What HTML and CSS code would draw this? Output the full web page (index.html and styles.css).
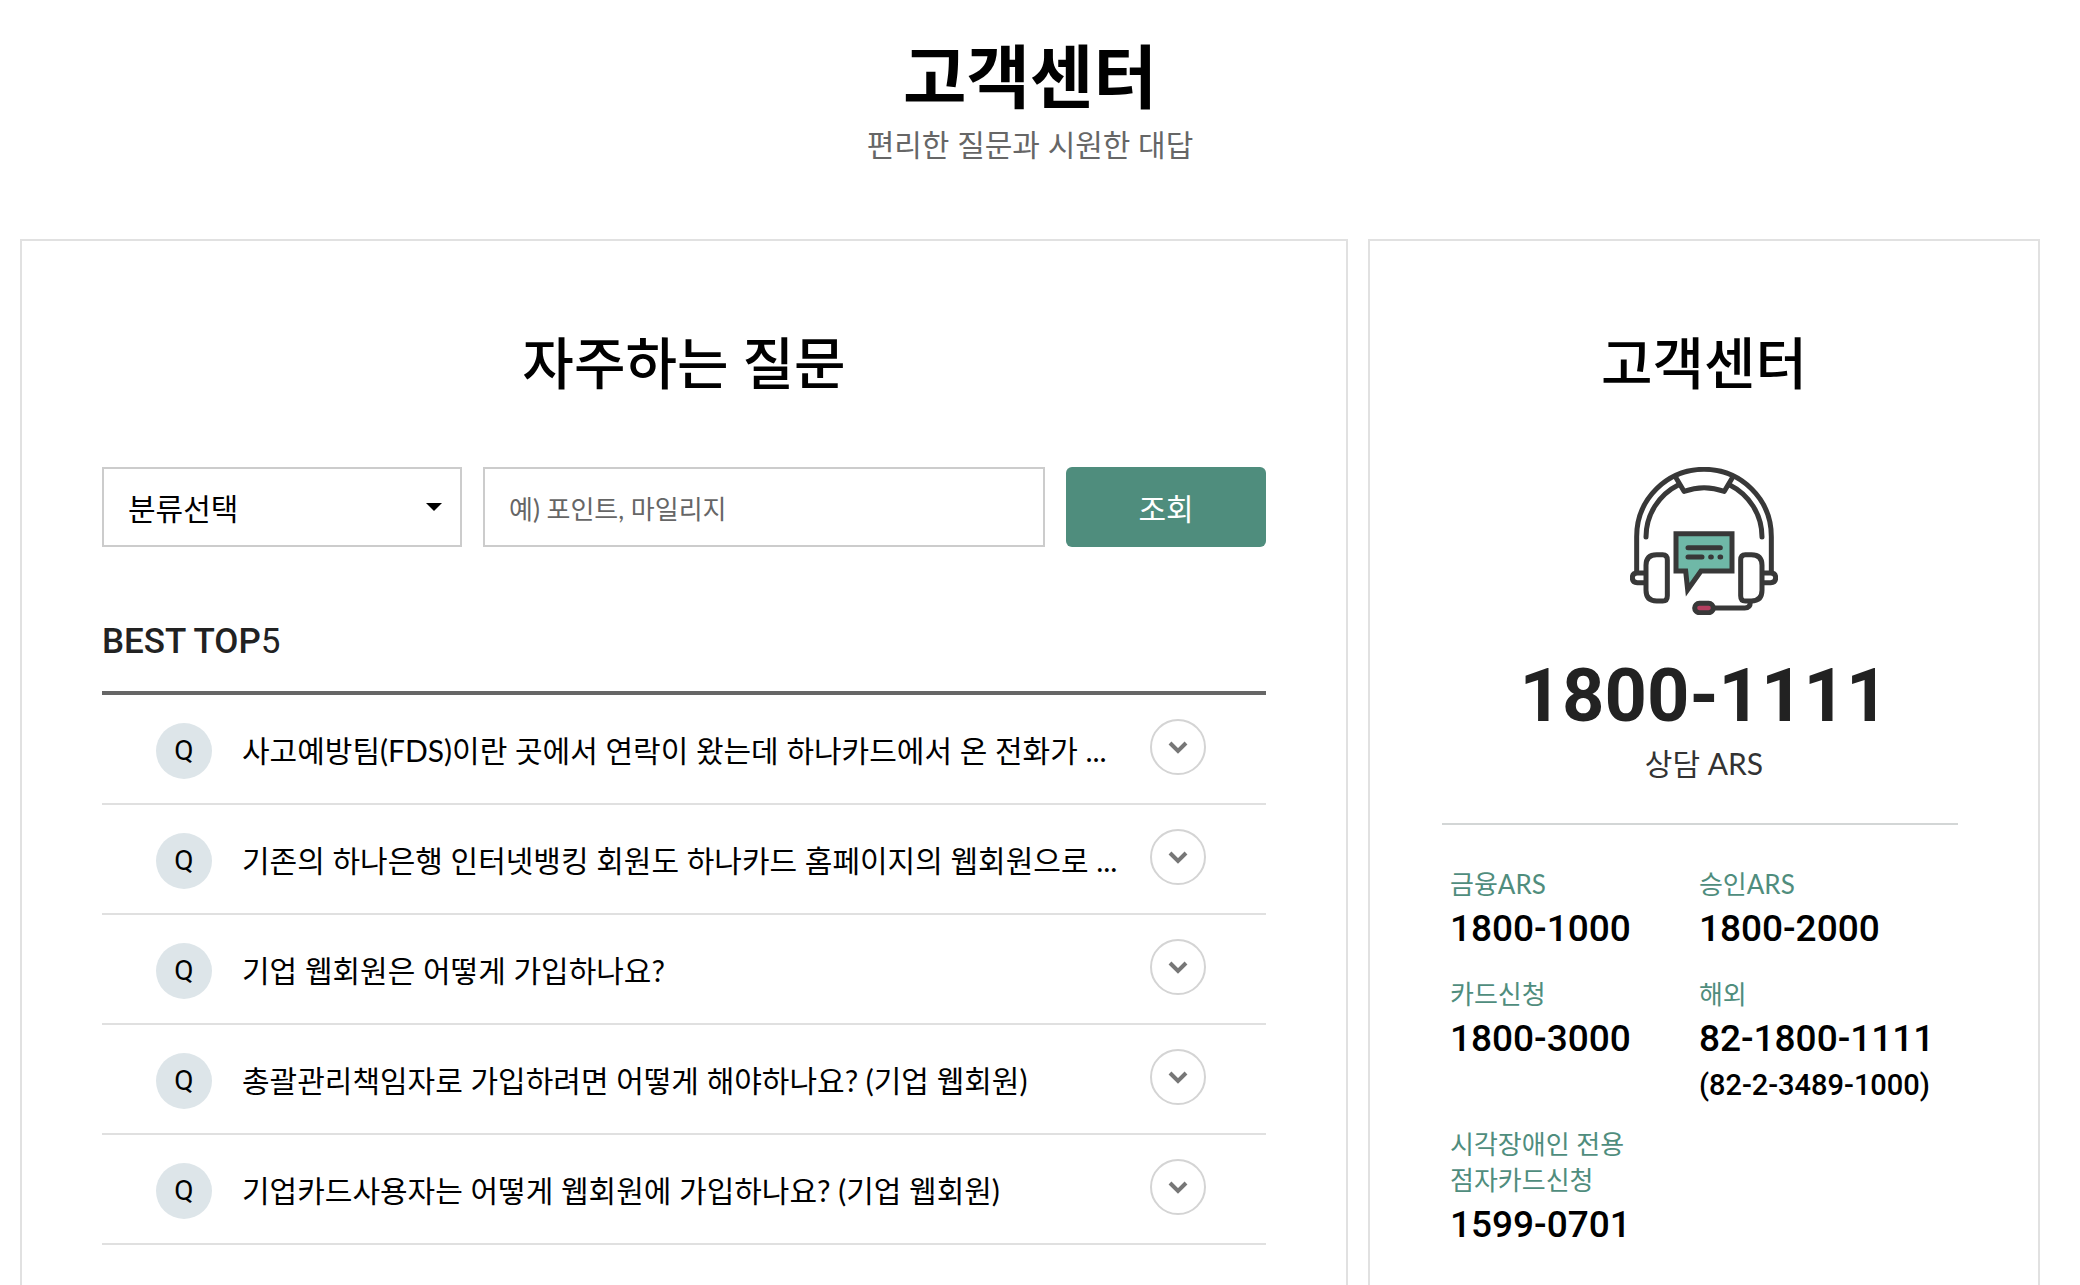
FILE: index.html
```
<!DOCTYPE html>
<html lang="ko">
<head>
	<meta charset="UTF-8">
	<meta name="viewport" content="width=device-width, initial-scale=1.0">
	<title>고객센터</title>

	<link rel="stylesheet" href="styles.css">
</head>
<body>
	<!-- arrow icon used by every question -->
	<svg class="sprite" aria-hidden="true">
		<symbol id="arrow" viewBox="0 0 56 56">
			<circle cx="28" cy="28" r="27" fill="#fff" stroke="#d4d4d4" stroke-width="2"/>
			<path d="M20 24l8 8 8-8" fill="none" stroke="#777" stroke-width="4"/>
		</symbol>
	</svg>

	<header class="page-title">
		<h1>고객센터</h1>
		<p>편리한 질문과 시원한 대답</p>
	</header>

	<main class="content">
		<section class="panel faq">
			<h2>자주하는 질문</h2>

			<form class="search">
				<div class="select-box">
					<select name="category" aria-label="분류선택">
						<option>분류선택</option>
					</select>
				</div>
				<input type="text" name="keyword" aria-label="검색어" placeholder="예) 포인트, 마일리지">
				<button type="button">조회</button>
			</form>

			<h3>BEST TOP<span>5</span></h3>
			<ul class="faq-list">
				<li>
					<button type="button">
						<span class="q">Q</span>
						<span class="text">사고예방팀(FDS)이란 곳에서 연락이 왔는데 하나카드에서 온 전화가 ...</span>
						<svg class="arrow" aria-hidden="true"><use href="#arrow"/></svg>
					</button>
				</li>
				<li>
					<button type="button">
						<span class="q">Q</span>
						<span class="text">기존의 하나은행 인터넷뱅킹 회원도 하나카드 홈페이지의 웹회원으로 ...</span>
						<svg class="arrow" aria-hidden="true"><use href="#arrow"/></svg>
					</button>
				</li>
				<li>
					<button type="button">
						<span class="q">Q</span>
						<span class="text">기업 웹회원은 어떻게 가입하나요?</span>
						<svg class="arrow" aria-hidden="true"><use href="#arrow"/></svg>
					</button>
				</li>
				<li>
					<button type="button">
						<span class="q">Q</span>
						<span class="text">총괄관리책임자로 가입하려면 어떻게 해야하나요? (기업 웹회원)</span>
						<svg class="arrow" aria-hidden="true"><use href="#arrow"/></svg>
					</button>
				</li>
				<li>
					<button type="button">
						<span class="q">Q</span>
						<span class="text">기업카드사용자는 어떻게 웹회원에 가입하나요? (기업 웹회원)</span>
						<svg class="arrow" aria-hidden="true"><use href="#arrow"/></svg>
					</button>
				</li>
			</ul>
		</section>

		<section class="panel center">
			<h2>고객센터</h2>

			<svg class="headset" viewBox="150 81 444 444" fill="none" stroke="#383838" stroke-width="15" stroke-linecap="round" stroke-linejoin="round" aria-hidden="true">
				<!-- head band -->
				<path d="M170 395V290C170 176 262 88 372 88S574 176 574 290V395"/>
				<path d="M198 291C198 224 236 164 296 134M546 291C546 224 508 164 448 134"/>
				<path d="M287 112L312 154Q372 132 433 154L458 112"/>
				<!-- ear cups -->
				<path d="M196 399H172Q157 399 157 413T172 428H196M548 399H572Q587 399 587 413T572 428H548"/>
				<path d="M230 344H248Q262 344 262 360V467Q262 483 248 483H230Q198 483 198 451V376Q198 344 230 344Z"/>
				<path d="M514 344H496Q482 344 482 360V467Q482 483 496 483H514Q546 483 546 451V376Q546 344 514 344Z"/>
				<!-- microphone -->
				<path d="M511 486Q511 504 494 504H402"/>
				<rect x="344" y="490" width="56" height="28" rx="14" fill="#b53f60"/>
				<!-- speech bubble -->
				<path d="M288 281H456V393H363L323 449L317 393H288Z" fill="#6fb8a7" stroke-linejoin="miter"/>
				<path d="M324 323H421M324 351H366M392 351H394M420 351H422"/>
			</svg>

			<strong class="main-tel">1800-1111</strong>
			<p class="main-label">상담 ARS</p>

			<hr>

			<dl class="tel-list">
				<div>
					<dt>금융ARS</dt>
					<dd>1800-1000</dd>
				</div>
				<div>
					<dt>승인ARS</dt>
					<dd>1800-2000</dd>
				</div>
				<div>
					<dt>카드신청</dt>
					<dd>1800-3000</dd>
				</div>
				<div>
					<dt>해외</dt>
					<dd>82-1800-1111</dd>
					<dd class="small">(82-2-3489-1000)</dd>
				</div>
				<div>
					<dt>시각장애인 전용<br>점자카드신청</dt>
					<dd>1599-0701</dd>
				</div>
			</dl>
		</section>
	</main>
</body>
</html>
```
FILE: styles.css
```
* {
	box-sizing: border-box;
	margin: 0;
	padding: 0;
}
body {
	padding: 0 40px 0 20px;
	background: #fff;
	color: #000;
	font-family: Lato, "Noto Sans CJK KR", sans-serif;
	font-size: 30px;
	line-height: 44px;
}
button, input, select {
	font-family: inherit;
	font-size: 30px;
	color: #000;
}
ul {
	list-style: none;
}
.sprite {
	display: none;
}

.page-title {
	padding: 32px 0 73px;
	text-align: center;
}
.page-title h1 {
	font-size: 69px;
	font-weight: 700;
	line-height: 90px;
}
.page-title p {
	color: #666;
}

.content {
	display: grid;
	grid-template-columns: 1328fr 672fr;
	gap: 20px;
}
.panel {
	min-width: 0;
	padding: 80px;
	border: 2px solid #e1e1e1;
}
.panel h2 {
	margin-bottom: 62px;
	font-size: 56px;
	font-weight: 500;
	line-height: 84px;
	text-align: center;
}

/* search */
.search {
	display: flex;
	gap: 21px;
	height: 80px;
}
.search .select-box {
	position: relative;
	flex: 0 0 360px;
}
.search .select-box::after {
	content: "";
	position: absolute;
	top: 36px;
	right: 20px;
	border: 8px solid transparent;
	border-top-color: #000;
	border-bottom: 0;
	pointer-events: none;
}
.search select {
	appearance: none;
	width: 100%;
	height: 100%;
	padding: 2px 24px 0;
	border: 2px solid #ccc;
	background: #fff;
}
.search input {
	flex: 1;
	min-width: 0;
	padding: 4px 24px 0;
	border: 2px solid #ccc;
	font-size: 26px;
}
.search input::placeholder {
	color: #666;
}
.search button {
	flex: 0 0 200px;
	border: 0;
	border-radius: 6px;
	background: #4f8d7d;
	color: #fff;
}

/* questions */
.faq h3 {
	margin-top: 70px;
	padding-bottom: 24px;
	border-bottom: 4px solid #666;
	color: #222;
	font-family: Roboto, sans-serif;
	font-size: 35px;
	font-weight: 500;
	line-height: 50px;
}
.faq h3 span {
	font-weight: 400;
}
.faq-list li {
	border-bottom: 2px solid #e0e0e0;
}
.faq-list button {
	display: flex;
	align-items: center;
	width: 100%;
	height: 108px;
	padding: 0 60px 0 54px;
	border: 0;
	background: none;
	text-align: left;
}
.faq-list .q {
	flex: none;
	width: 56px;
	margin: 4px 30px 0 0;
	border-radius: 50%;
	background: #dde5e9;
	font-family: Roboto, sans-serif;
	font-size: 28px;
	line-height: 56px;
	text-align: center;
}
.faq-list .text {
	flex: 1;
	overflow: hidden;
	white-space: nowrap;
	text-overflow: ellipsis;
}
.faq-list .arrow {
	flex: none;
	width: 56px;
	height: 56px;
	margin: 0 0 4px 20px;
}

/* customer center */
.center .headset {
	display: block;
	width: 148px;
	height: 148px;
	margin: 0 auto 41px;
}
.center .main-tel {
	display: block;
	color: #222;
	font-family: Roboto, sans-serif;
	font-size: 74px;
	font-weight: 700;
	line-height: 80px;
	text-align: center;
}
.center .main-label {
	margin-top: 5px;
	color: #333;
	text-align: center;
}
.center hr {
	margin: 38px 0 41px -8px;
	border: 0;
	border-top: 2px solid #d3d6d6;
}
.tel-list {
	display: grid;
	grid-template-columns: 49% 51%;
	row-gap: 20px;
}
.tel-list div {
	min-height: 90px;
}
.tel-list dt {
	margin-bottom: 6px;
	color: #4f8d7d;
	font-size: 26px;
	line-height: 36px;
}
.tel-list dd {
	font-family: Roboto, sans-serif;
	font-size: 37px;
	font-weight: 500;
	line-height: 42px;
}
.tel-list dd.small {
	margin-top: 4px;
	font-size: 29px;
}
```
